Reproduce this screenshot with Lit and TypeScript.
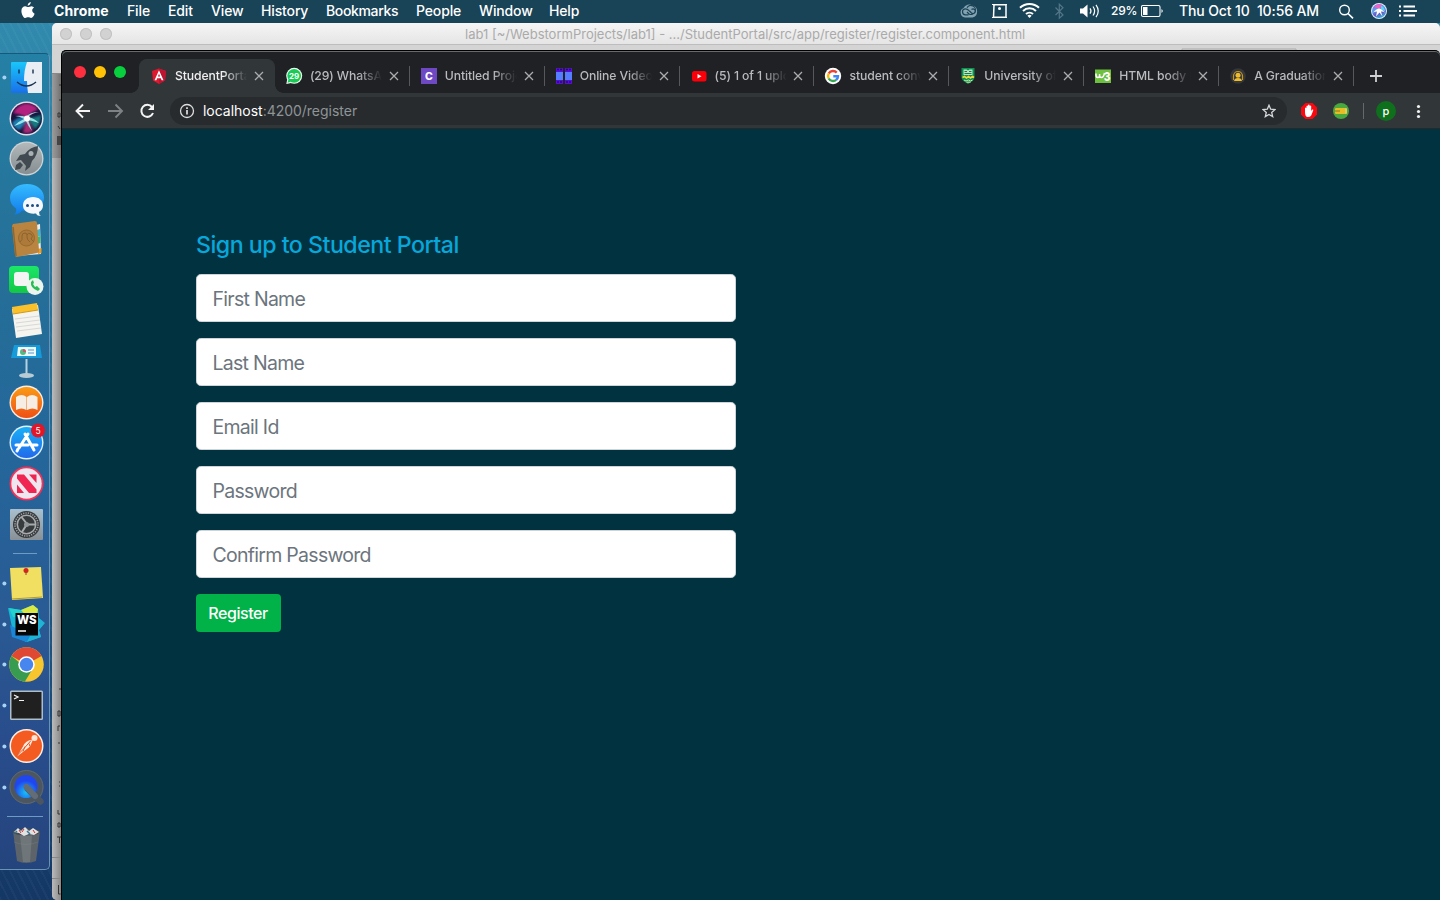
import { LitElement, html, svg, css } from "lit";
import { customElement } from "lit/decorators.js";

const close = html`<svg class="x" viewBox="0 0 10 10" width="10" height="10"><path d="M1 1L9 9M9 1L1 9" stroke="currentColor" stroke-width="1.300"/></svg>`;

@customElement("menu-bar")
class MenuBar extends LitElement {
  static styles = css`
    :host { display: flex; height: 23px; background: #194357; color: #fff; font: 500 14px/22px Inter, sans-serif; letter-spacing: -0.14px; }
    .menus { display: grid; grid-template-columns: 54px 73px 41px 43px 50px 65px 90px 63px 70px 60px; flex: none; white-space: nowrap; }
    .app { font-weight: 700; letter-spacing: 0.1px; }
    .mark { letter-spacing: -0.35px; }
    .apple { margin: 2px 0 0 21px; }
    .right { margin-left: auto; display: grid; grid-template-columns: 154px 68px 160px 101px; height: 23px; white-space: nowrap; flex: none; }
    .pct { font-size: 12px; letter-spacing: -0.25px; display: flex; gap: 4px; }
    .clock { white-space: pre; letter-spacing: -0.12px; }
    svg { display: block; }
  `;
  render() {
    return html`
      <div class="menus">
        <svg class="apple" width="14" height="17" viewBox="0 0 14 17"><path fill="#fff" d="M9.800 0C9.900 1.700 8.500 3.600 6.700 3.700C6.500 2 8.100.2 9.800 0ZM13 5.600C10.300 7.200 10.800 10.500 13.600 11.700C13 13.400 11.700 16 10.100 16C9 16 8.600 15.300 7.200 15.300C5.800 15.300 5.300 16 4.300 16C2.600 15.900.4 12.300.4 8.900C.4 5.800 2.300 4.300 4.200 4.300C5.500 4.300 6.400 5.100 7.200 5.100C8 5.100 9.200 4.200 10.700 4.200C11.400 4.300 12.400 4.700 13 5.600Z"/></svg>
        <span class="app">Chrome</span>
        ${["File", "Edit", "View", "History", "Bookmarks", "People", "Window", "Help"].map((t) => html`<span class=${t === "Bookmarks" ? "mark" : ""}>${t}</span>`)}
      </div>
      <div class="right">
        <svg width="154" height="23" viewBox="957 0 154 23" fill="none">
          <path d="M965 17.500a5 5 0 0 1-1.500-9.500 6.500 6.500 0 0 1 9-2.500 6.200 6.200 0 0 1 0 12z" fill="#84a3b0"/>
          <path stroke="#194357" stroke-width="1.200" d="M968.500 14.800h-3a3 3 0 0 1 0-6q2 0 3.500 1.800l2.500 2.600M967 7.800a4.500 4.500 0 1 1 2 6.200l-2-2M971.500 9.500a2.300 2.300 0 1 1 0 3.500l-2-2"/>
          <path stroke="#fff" stroke-width="1.500" d="M993 4.800H1006M994 5L993.500 17.300H1006V5"/><path stroke="#fff" d="M992 4.500h2M1005 4.500h2M992 17.500h2M1005 17.500h2"/><circle cx="999.500" cy="8.500" r="1.500" fill="#fff"/>
          <g stroke="#fff" stroke-width="2"><path d="M1020 7.800a13.500 13.500 0 0 1 19 0"/><path d="M1023 11a9.300 9.300 0 0 1 13 0"/><path d="M1026 14a5.300 5.300 0 0 1 7 0"/></g><path fill="#fff" d="M1027.400 15.800a3 3 0 0 1 4.200 0L1029.500 18Z"/>
          <path stroke="#527587" stroke-width="1.200" d="M1055.500 7.500L1063 15L1059.300 18.200V4.200L1063 7.800L1055.500 15"/>
          <path fill="#fff" d="M1080 8.500h3l4.500-4v13l-4.500-4h-3z"/><g stroke="#fff" stroke-width="1.200"><path d="M1090 8.300q2 2.700 0 5.400M1093 6.500q3.200 4.500 0 9M1096 4.800q4.500 6.200 0 12.400"/></g>
        </svg>
        <span class="pct"><span>29%</span><svg width="24" height="23" viewBox="0 0 24 23" fill="none"><rect x="0.500" y="5.500" width="18.500" height="11" rx="1.500" stroke="#fff" stroke-width="1.100"/><rect x="2" y="7" width="4.500" height="8" fill="#fff"/><path d="M20.500 9q2.500 2 0 4z" fill="#fff"/></svg></span>
        <span class="clock">Thu Oct 10  10:56 AM</span>
        <svg width="101" height="23" viewBox="1339 0 101 23" fill="none"><defs><linearGradient id="ms" x2=".4" y2="1"><stop offset="0" stop-color="#b44bdc"/><stop offset=".45" stop-color="#5aa4ee"/><stop offset=".75" stop-color="#6a55c8"/><stop offset="1" stop-color="#3c9fd0"/></linearGradient></defs>
          <circle cx="1344.500" cy="10" r="4.800" stroke="#fff" stroke-width="1.400"/><path d="M1348 13.500L1353 18.300" stroke="#fff" stroke-width="1.700"/>
          <circle cx="1379" cy="11" r="8" fill="#dff1ff"/><circle cx="1379" cy="11" r="7" fill="url(#ms)"/><path d="M1374 7q4-4 8-2l-2 4z" fill="#f263c0"/><path d="M1381 5.500q4 2 4 6l-4-2z" fill="#5bd5f5"/><path d="M1373 12.500q4-4 6-4t6 4q-3-1.500-4-1l1.500 5-3-4-3.500 4 1-5q-2 0-4 1z" fill="#fff"/>
          <path stroke="#fff" stroke-width="1.800" d="M1403.500 6.500H1415M1403.500 11H1417M1403.500 15.500H1415M1399 6.500h2M1399 11h2M1399 15.500h2"/>
        </svg>
      </div>`;
  }
}

const dockIcons = [
  svg`<rect x="11" y="5" width="31" height="31" rx="1" fill="url(#fb)"/><path d="M27 5h15v31H28q-1-7-1-12h-3q0-11 3-19z" fill="#e9edf4"/><path d="M19 12.500v4M33 12.500v4" stroke="#173150" stroke-width="1.400"/><path d="M17 25q9.500 8 19 0" fill="none" stroke="#173150" stroke-width="1.400"/>`,
  svg`<circle cx="26.500" cy="20.500" r="17" fill="#e6e8ee"/><circle cx="26.500" cy="20.500" r="15.500" fill="#1a1440"/><g filter="url(#soft)"><path d="M13 15q5-9 14-9.500 8 1 11 6-6 2-11 8-7-4-14-4.500z" fill="#b3247e"/><path d="M12 25q6-8 15-5-3 9-8 12-6-3-7-7z" fill="#1c7cae"/><path d="M27 20q6 0 14-3 0 9-6 14z" fill="#127a80"/><path d="M27 20l6 13q-6 4-10 1z" fill="#a52a72"/></g><path d="M39 14q-7 1-11 5 6 1 11 6-6-2-11-3 2 5 4 11-4-5-6-10-5 3-12 5 5-5 10-7-5-3-9-3 6-1 11 1 4-5 13-5z" fill="#aef4f2" opacity=".85"/><circle cx="27" cy="20.500" r="3" fill="#fff"/>`,
  svg`<circle cx="26.500" cy="20.500" r="17" fill="#d0d3d5"/><circle cx="26.500" cy="20.500" r="15.700" fill="url(#rk)"/><path d="M38 8q-8 1-13 8l-5 1-4 6 5-1 5 6-1 5 5-4 2-6q6-6 6-15z" fill="#414a51"/><circle cx="31" cy="15.500" r="2.500" fill="#aab1b5"/><path d="M20 24l-4 3-1 5 5-1 3-4z" fill="#414a51"/>`,
  svg`<path d="M27 5c10 0 17 6 17 13.500S37 32 27 32q-3 0-5-.5-3 4-8 4 3-2 2-6-6-4-6-11C10 11 17 5 27 5z" fill="url(#bl)"/><path d="M33 18c6 0 10 3.500 10 8.500q0 4-4 6.500 0 3 2 4-4 0-5-2.500c-8 1-13-3-13-8S27 18 33 18z" fill="#f5f8fc"/><g fill="#1d4b88"><circle cx="27.500" cy="26.500" r="1.500"/><circle cx="32.500" cy="26.500" r="1.500"/><circle cx="37.500" cy="26.500" r="1.500"/></g>`,
  svg`<path d="M36 6l4-1 1 30-24 2z" fill="#eee"/><path d="M37 11l3-1v7l-3 1z" fill="#40b6cf"/><path d="M37 18l3.500-1v7l-3.500 1z" fill="#42b870"/><path d="M38 30l3.500-1v5l-3.500 1z" fill="#ed9d26"/><path d="M13 5l22-3q2 0 2 2l2 28q0 2-2 2l-20 4q-2 0-2-2L12 8q0-2 1-3z" fill="#b9843f"/><path d="M13 8l3 29" stroke="#956629" stroke-width="1.500"/><circle cx="26.500" cy="19" r="8" fill="#ad7a39" stroke="#976a31"/><path d="M20 23q3-2 2-6 0-3 3-3t2 4q0 3 3 5M27 16q1-3 4-1t0 5l3 3" fill="none" stroke="#8b6431"/>`,
  svg`<rect x="9" y="6" width="30" height="27" rx="4" fill="url(#gr)"/><rect x="14" y="12" width="15" height="14" rx="3" fill="#f4f4f4"/><circle cx="35" cy="26.500" r="8.500" fill="#edf6ee"/><path d="M31 22q-1 6 7 9l2-2-3-3-2 1-2-3 1-1-1-3z" fill="#29bd56"/>`,
  svg`<path d="M12 8l26-4 4 29-26 4z" fill="#f6f4ee"/><path d="M12 6l25-4 1 7-25 4z" fill="#f9c12c"/><path d="M15 18l24-3M16 22l24-3M16 26l24-3M17 30l24-3" stroke="#d7d8d9"/><path d="M13 13l25-4" stroke="#d19a18"/>`,
  svg`<path d="M14 4h26l2 13H11z" fill="#159bd9"/><path d="M18 6h18v9H17z" fill="#eef9fa"/><circle cx="23" cy="11" r="3" fill="#4dbc83"/><path d="M23 11V8q3 0 3 3z" fill="#df516b"/><path d="M28 9h6M28 12h6" stroke="#529bcd"/><path d="M26.500 18v15" stroke="#b4d3e2" stroke-width="2"/><ellipse cx="26.500" cy="34.500" rx="7.500" ry="2.400" fill="#b8cbd5"/>`,
  svg`<circle cx="26.500" cy="20.500" r="17" fill="#f8eee4"/><circle cx="26.500" cy="20.500" r="15.600" fill="url(#or)"/><path d="M16 15q6-4 10.500 0V28q-5-3-10.500 0zM27 15q5-4 10.500 0v13q-5-3-10.500 0z" fill="#f6eee5"/>`,
  svg`<circle cx="26.500" cy="20.500" r="17" fill="#e2f1ff"/><circle cx="26.500" cy="20.500" r="15.600" fill="url(#ap)"/><path d="M25 12l9 16M28 12L19 26M16 23h12M31 23h6M18 27l-1 2" fill="none" stroke="#fff" stroke-width="3" stroke-linecap="round"/><circle cx="38" cy="8.500" r="7" fill="#e31527"/><text x="38" y="11.500" text-anchor="middle" fill="#fff" font-size="8.500" font-family="Inter, sans-serif">5</text>`,
  svg`<circle cx="26.500" cy="20.500" r="17" fill="#fa3057"/><circle cx="26.500" cy="20.500" r="15.200" fill="#eee7ef"/><path d="M17 11.500h7l12.500 15v3.500H29L17 15.500zM29 11.500h7.500v8.500zM17 21.500l7 8.500h-7z" fill="#f12551"/>`,
  svg`<rect x="10" y="5" width="33" height="31" rx="1" fill="url(#sy)"/><circle cx="26.500" cy="20.500" r="13.500" fill="#373b3e"/><circle cx="26.500" cy="20.500" r="11.500" fill="none" stroke="#9fa3a5" stroke-width="1.600" stroke-dasharray="1.200 1.200"/><circle cx="26.500" cy="20.500" r="9.200" fill="none" stroke="#a7abad" stroke-width="1.600"/><path d="M27 20L21.500 13M27 20.500H36M27 20L22 28" stroke="#a7abad" stroke-width="2"/><circle cx="26.500" cy="20.500" r="2.500" fill="#92989b"/>`,
  svg`<path d="M10 5l31-1 2 31-31 2z" fill="#f1df62"/><path d="M12 36l30-2" stroke="#ad9a3a"/><circle cx="26" cy="7.500" r="2.500" fill="#d22522"/><path d="M26 9v3" stroke="#8a4425"/>`,
  svg`<path d="M8 4l13 2 12-5 5 4 1 9 6 5-6 7 2 7-14 5-13-5z" fill="#18b6d6"/><path d="M21 6l12-5 5 4-1 6H17z" fill="#d9e843"/><path d="M13 13l-4-9 12 2 8 9z" fill="#24d1cc"/><path d="M12 29l16 8 9-5-3-20 5 3 5 4-5 7 2 7-15 5z" fill="#22b3d4"/><path d="M10 21l2 12 15 5 3-6z" fill="#1a86d8"/><rect x="15.500" y="9" width="22.500" height="22.500" fill="#050505"/><text x="17" y="20" fill="#fff" font-size="11.500" font-weight="800" font-family="Inter, sans-serif" textLength="19.500">WS</text><path d="M18 27h8" stroke="#fff" stroke-width="1.500"/>`,
  svg`<circle cx="26.500" cy="20.500" r="17.300" fill="#f7c52d"/><path d="M26.500 20.500L11.500 12a17.300 17.300 0 0 1 30 0z" fill="#df4934"/><path d="M11.500 12a17.300 17.300 0 0 0 13.300 25.700l8-13.200h-6.300z" fill="#389c50"/><circle cx="26.500" cy="20.500" r="8.300" fill="#fff"/><circle cx="26.500" cy="20.500" r="6.700" fill="#4686ee"/>`,
  svg`<rect x="10" y="5.500" width="33" height="29.500" rx="1.500" fill="#aebec8"/><rect x="11.500" y="7" width="30" height="26.500" fill="#202020"/><path d="M14 10l4 2-4 2M19 15.500h5" stroke="#f4f4f4" stroke-width="1.200" fill="none"/>`,
  svg`<circle cx="26.500" cy="20" r="17" fill="#fff0e5"/><circle cx="26.500" cy="20" r="15.500" fill="#f45b21"/><circle cx="34.500" cy="12" r="3" fill="#ffe4d6"/><path d="M33 13.500q-8 1-10 7l-6 10q8-6 13-10z" fill="#ffe8dc"/><path d="M31 14.500l-7 8-8 8M29 17.500l1 3M25 20.500l-2 5" stroke="#d75a2d" fill="none"/>`,
  svg`<circle cx="26.500" cy="20" r="17" fill="#4c5660"/><circle cx="26.500" cy="20" r="16.500" fill="none" stroke="#5f6973"/><circle cx="26" cy="19.500" r="11.500" fill="url(#qt)"/><path d="M28 22L40.500 34.500" stroke="#4c5660" stroke-width="6.500" stroke-linecap="round"/><path d="M26.500 20L35 29" stroke="#626d77" stroke-width="6" stroke-linecap="round"/>`,
];
const running = new Set([0, 12, 13, 14, 15, 16, 17]);

@customElement("app-dock")
class AppDock extends LitElement {
  static styles = css`
    :host { display: flex; flex-direction: column; box-sizing: border-box; width: 51px; height: 817px; padding: 3px 0 0; border: 1px solid #6992b5; border-left: 0; border-top-color: #17597a; border-radius: 0 5px 5px 0; background: linear-gradient(#2580a5, #257098 25%, #24679a 48%, #295b94 68%, #294d8c 84%, #24447d); }
    svg { display: block; overflow: visible; flex: none; margin-left: 0.500px; }
    .upper { display: grid; grid-auto-rows: 40.600px; }
    .lower { display: grid; grid-auto-rows: 40.750px; }
    .line { height: 1px; margin: 8.600px 0 9.200px 14px; width: 24px; background: #6c9bc4; flex: none; }
    .line.wide { margin: 8.500px 0 8px 8px; width: 36px; }
  `;
  icon(i: number) {
    return html`<svg width="52" height="40.750" viewBox="0 0 52 40.750">${running.has(i) ? svg`<circle cx="4.400" cy="20.500" r="2" fill="#a6d2f3"/>` : ""}${dockIcons[i]}
      <defs>
        <filter id="soft"><feGaussianBlur stdDeviation="0.800"/></filter>
        <linearGradient id="fb" x2="0" y2="1"><stop stop-color="#19c6fa"/><stop offset="1" stop-color="#1970ea"/></linearGradient>
        <linearGradient id="rk" x2="0" y2="1"><stop stop-color="#b3b8ba"/><stop offset="1" stop-color="#858e91"/></linearGradient>
        <linearGradient id="bl" x2="0" y2="1"><stop stop-color="#35bcff"/><stop offset="1" stop-color="#127beb"/></linearGradient>
        <linearGradient id="gr" x2="0" y2="1"><stop stop-color="#1be668"/><stop offset="1" stop-color="#13c744"/></linearGradient>
        <linearGradient id="or" x2="0" y2="1"><stop stop-color="#fa9b16"/><stop offset="1" stop-color="#ee4f15"/></linearGradient>
        <linearGradient id="ap" x2="0" y2="1"><stop stop-color="#19b0f7"/><stop offset="1" stop-color="#2269eb"/></linearGradient>
        <linearGradient id="sy" x2="0" y2="1"><stop stop-color="#a9c0ce"/><stop offset="1" stop-color="#899096"/></linearGradient>
        <radialGradient id="qt" cy=".75"><stop stop-color="#16c4f6"/><stop offset="1" stop-color="#2047ef"/></radialGradient>
      </defs></svg>`;
  }
  render() {
    return html`
      <div class="upper">${dockIcons.slice(0, 12).map((_, i) => this.icon(i))}</div>
      <div class="line"></div>
      <div class="lower">${dockIcons.slice(12).map((_, i) => this.icon(i + 12))}</div>
      <div class="line wide"></div>
      <svg width="52" height="41" viewBox="0 0 52 41"><path d="M13 6q13-5 27 0l-4 30q-10 4-19 0z" fill="#5d6469"/><path d="M20 10l3 27h7l2-27z" fill="#7b8286" opacity=".6"/><path d="M14 17q12 5 24 0" stroke="#888e93" fill="none" opacity=".25"/><ellipse cx="26.500" cy="7" rx="13.500" ry="3.500" fill="#444b52"/><path d="M14 7l4-4 3 3 4-4 4 4 4-3 6 4-5 3-5-1-5 2-5-3z" fill="#e1e3e3"/><path d="M19 5l2 3M24 4l-2 3M33 5l2 3" stroke="#c33"/><path d="M27 6l3 3M17 6l-2 2" stroke="#397a97" stroke-width="1.500"/></svg>`;
  }
}

const fav: Record<string, unknown> = {
  angular: svg`<path d="M8 .5l7 2.500-1 9.500L8 16l-6-3.500L1 3z" fill="#e0182d"/><path d="M8 .5l7 2.500-1 9.500L8 16z" fill="#bd1432"/><path d="M3.500 12.300L8 2.200l4.500 10.100h-1.900l-.8-2.100H6.200l-.8 2.100zM6.900 8.500h2.200L8 5.800z" fill="#fff"/>`,
  whatsapp: svg`<circle cx="8.200" cy="7.800" r="8" fill="#f2fff5"/><path d="M.3 16l1-5 4 4z" fill="#f2fff5"/><circle cx="8.200" cy="7.800" r="6.900" fill="#18cb55"/><path d="M1.500 14.800l1-3.500 2.500 2.500z" fill="#18cb55"/><text x="8.200" y="10.700" text-anchor="middle" font-size="8" font-weight="700" fill="#fff">29</text>`,
  c: svg`<rect width="16" height="16" fill="#6f48c4"/><text x="8" y="11.800" text-anchor="middle" font-size="10.500" font-weight="800" fill="#fff">C</text>`,
  video: svg`<path d="M0 0h7v16H0zM9 0h7v16H9z" fill="#5a0cdd"/><path d="M0 4h7v8H0zM9 4h7v8H9z" fill="#567cff"/><path d="M1 1.500h2M4 1.500h2M1 14h2M4 14h2M10 1.500h2M13 1.500h2M10 14h2M13 14h2" stroke="#1b144a" stroke-width="1.500"/>`,
  youtube: svg`<rect x="1" y="3" width="14.500" height="10.500" rx="2.500" fill="#fb0009"/><path d="M6.500 6l4 2.300-4 2.300z" fill="#fff"/>`,
  google: svg`<circle cx="8" cy="8" r="8.200" fill="#fff"/><g fill="none" stroke-width="2.400"><path d="M3.700 5.500A5 5 0 0 1 11.700 4.600" stroke="#e94435"/><path d="M3.700 5.500a5 5 0 0 0 0 5" stroke="#fabb05"/><path d="M3.700 10.500a5 5 0 0 0 7.500 1.400" stroke="#34a853"/><path d="M11.200 11.900Q13 10.200 13 8.200H8.300" stroke="#4285f4"/></g>`,
  university: svg`<path d="M1.500 0h13v9.500q0 3-6.500 6.500Q1.500 12.500 1.500 9.500z" fill="#099452"/><path d="M3.500 1.500h3l1.500 1 1.500-1h3v5.500h-9z" fill="#c5dfc3"/><path d="M4.500 3.500h2.500M9 3.500h2.500M4.500 5.500h7" stroke="#167d48"/><path d="M2.500 9.500l2-1 2 1.500 2-1.500 2 1.500 2-1.500 1.500 1" stroke="#f6d834" stroke-width="1.600" fill="none"/><path d="M4 12l2 1 2.300-1 2.200 1 2-1M6.500 14.200h4" stroke="#d3e6ac" fill="none"/>`,
  w3: svg`<rect y="1.500" width="16" height="13.500" fill="#6ec13e"/><path d="M1 5.500v1.500q0 2.500 1.800 2.500T4.600 7.500V6V7.500q0 2 2 2T9.500 5" stroke="#fff" stroke-width="1.500" fill="none"/><text x="8.800" y="13" font-size="12" font-weight="800" fill="#fff" textLength="6.700" lengthAdjust="spacingAndGlyphs">3</text>`,
  graduation: svg`<circle cx="8" cy="8" r="7.800" fill="#34373c"/><path d="M3.500 12V8a4.500 4.500 0 0 1 9 0v4" fill="none" stroke="#c7981b" stroke-width="1.200"/><circle cx="8" cy="7.300" r="2.500" fill="#edbd2c"/><path d="M4 13q.5-3 4-3t4 3z" fill="#edbd2c"/>`,
};
const tabs = [["angular", "StudentPortal"], ["whatsapp", "(29) WhatsApp"], ["c", "Untitled Project"], ["video", "Online Video"], ["youtube", "(5) 1 of 1 upload"], ["google", "student conv"], ["university", "University of"], ["w3", "HTML body b"], ["graduation", "A Graduation"]];

@customElement("chrome-window")
class ChromeWindow extends LitElement {
  static styles = css`
    :host { display: flex; flex-direction: column; box-sizing: border-box; border: 1px solid #000; border-right: 0; border-bottom: 0; border-radius: 5px 5px 0 0; background: #00323f; overflow: hidden; font-family: Inter, sans-serif; }
    svg { display: block; flex: none; }
    .strip { height: 42px; display: flex; align-items: flex-end; background: #202125; box-shadow: inset 0 1px #69696b; border-radius: 5px 5px 0 0; flex: none; }
    .lights { display: flex; gap: 8px; padding-left: 12px; width: 65px; align-self: center; flex: none; }
    .dot { width: 12px; height: 12px; border-radius: 50%; background: #fe3040; }
    .dot.y { background: #ffc105; } .dot.g { background: #08cf3e; }
    .tab { display: flex; align-items: center; box-sizing: border-box; width: 134.900px; height: 34px; padding: 0 10px 0 12px; color: #b9bbbd; flex: none; position: relative; }
    .tab.on { background: #313639; color: #f0f0f0; border-radius: 8px 8px 0 0; box-shadow: 1px 0 #313639; }
    .tab.on::before, .tab.on::after { content: ""; position: absolute; bottom: 0; width: 8px; height: 8px; }
    .tab.on::before { left: -8px; background: radial-gradient(circle at 0 0, transparent 7.500px, #313639 8px); }
    .tab.on::after { right: -9px; background: radial-gradient(circle at 100% 0, transparent 7.500px, #313639 8px); }
    .tab:not(.on)::after { content: ""; position: absolute; right: -1px; top: 7px; width: 1px; height: 20px; background: #56585b; }
    .name { width: 72px; margin: 0 7px 0 8px; overflow: hidden; white-space: nowrap; font: 500 12.200px/18px Inter, sans-serif; letter-spacing: -0.1px; mask-image: linear-gradient(90deg, #000 48px, transparent 72px); }
    .x { color: #aaacae; }
    .plus { margin: 0 0 11px 17px; }
    .bar { height: 36px; display: flex; align-items: center; background: #313639; border-bottom: 1px solid #24292b; box-sizing: border-box; flex: none; }
    .omni { display: flex; align-items: center; box-sizing: border-box; width: 1117px; height: 28px; border-radius: 14px; background: #272b2e; padding: 0 11px 0 9px; color: #8f9497; font-size: 14px; flex: none; }
    .url { margin-left: 8px; flex: 1; letter-spacing: -0.02px; }
    .host { color: #fff; }
    .page { flex: 1; padding: 102px 0 0 134px; }
    .form { display: flex; flex-direction: column; align-items: flex-start; gap: 16px; width: 540px; }
    h1 { margin: 0 0 -2px; height: 29px; font: 500 23.200px/29px Inter, sans-serif; color: #08a7db; letter-spacing: -0.510px; white-space: nowrap; }
    input { display: block; box-sizing: border-box; width: 540px; height: 48px; border: 1px solid #ced4da; border-radius: 4.800px; background: #fff; padding: 2px 16px 0 15.500px; font: 400 19.500px/30px Inter, sans-serif; letter-spacing: -0.720px; outline: 0; }
    input::placeholder { color: #6c757d; opacity: 1; }
    button { width: 85px; height: 38px; padding: 0 1px 0 0; border: 0; border-radius: 4px; background: #00b247; color: #fff; font: 500 16px/24px Inter, sans-serif; letter-spacing: -0.450px; }
  `;
  render() {
    return html`
      <div class="strip">
        <div class="lights"><i class="dot"></i><i class="dot y"></i><i class="dot g"></i></div>
        ${tabs.map(([icon, name], i) => html`<div class="tab ${i ? "" : "on"}"><svg width="16" height="16" viewBox="0 0 16 16" overflow="visible">${fav[icon]}</svg><span class="name">${name}</span>${close}</div>`)}
        <svg class="plus" width="12" height="12" viewBox="0 0 12 12"><path d="M6 0v12M0 6h12" stroke="#d0d1d2" stroke-width="1.800"/></svg>
      </div>
      <div class="bar">
        <svg width="108" height="36" viewBox="62 93 108 36" fill="none"><path d="M83 104.500L76.500 111L83 117.500M77 111H90" stroke="#f4f4f4" stroke-width="1.900"/><path d="M115.500 104.500L122 111L115.500 117.500M108 111H121" stroke="#7e8285" stroke-width="1.900"/><path d="M152 107A6 6 0 1 0 153 113" stroke="#f4f4f4" stroke-width="2"/><path d="M154 104v6h-6z" fill="#f4f4f4"/></svg>
        <div class="omni">
          <svg width="16" height="16" viewBox="0 0 16 16"><circle cx="8" cy="8" r="6.500" fill="none" stroke="#ddd" stroke-width="1.300"/><path d="M8 7v4.500M8 4.200v1.700" stroke="#eee" stroke-width="1.600"/></svg>
          <span class="url"><span class="host">localhost</span>:4200/register</span>
          <svg class="star" width="14" height="14" viewBox="0 0 14 14"><path d="M7 1.200l1.700 4 4.300.4-3.300 2.800 1 4.200L7 10.400l-3.700 2.200 1-4.200L1 5.600l4.300-.4z" fill="none" stroke="#d5d7d8" stroke-width="1.300"/></svg>
        </div>
        <svg width="153" height="36" viewBox="1287 93 153 36"><path d="M1305.500 103h7l4.500 4.500v7l-4.500 4.500h-7l-4.500-4.500v-7z" fill="#fa0710"/><path d="M1305 112v-4q1-1 1.500 0v-2q1-1 1.500 0v-1q1-1 1.600 0v1q1-1 1.600 0v5l1-1.500q1.500-.5 1 1l-2 5q-1 1.500-3.500 1.500-2.700 0-2.700-5z" fill="#fff"/><circle cx="1341" cy="111" r="8" fill="#49a93f"/><rect x="1335" y="108" width="12" height="6" rx="1" fill="#e7bd24"/><path d="M1335 111h5" stroke="#85752a"/><path d="M1346 108.500v5" stroke="#d8dcc0"/><path d="M1363.500 103v16" stroke="#66696b"/><circle cx="1386" cy="111" r="10" fill="#0e701c"/><text x="1386" y="114.500" font-size="11" font-weight="500" text-anchor="middle" fill="#fff">p</text><g fill="#f1f1f1"><circle cx="1418.500" cy="106.500" r="1.600"/><circle cx="1418.500" cy="111.500" r="1.600"/><circle cx="1418.500" cy="116.500" r="1.600"/></g></svg>
      </div>
      <div class="page"><div class="form">
        <h1>Sign up to Student Portal</h1>
        ${["First Name", "Last Name", "Email Id", "Password", "Confirm Password"].map((p) => html`<input placeholder=${p} />`)}
        <button>Register</button>
      </div></div>`;
  }
}

@customElement("app-root")
class AppRoot extends LitElement {
  static styles = css`
    :host { display: block; position: relative; width: 1440px; height: 900px; overflow: hidden; background: repeating-linear-gradient(63deg, #ffffff08 0 2px, transparent 2px 7px), linear-gradient(#328cae, #2679a0 25%, #205d86 60%, #143765); }
    .editor { position: absolute; left: 52px; top: 23px; width: 1388px; height: 877px; border-radius: 5px 5px 0 5px; overflow: hidden; background: #aaa; }
    .title { display: flex; height: 21px; border-bottom: 1px solid #bdbdbd; background: linear-gradient(#f5f5f5, #e5e5e5); color: #aaa; font: 400 13px/23px Inter, sans-serif; letter-spacing: 0; white-space: nowrap; }
    .lights { display: flex; gap: 8px; padding: 5px 0 0 8px; width: 405px; flex: none; }
    .off { width: 12px; height: 12px; border-radius: 50%; background: #d2d2d2; box-shadow: inset 0 0 0 1px #c2c2c2; }
    .sidebar { display: block; }
    .wind { position: absolute; left: 61px; top: 50px; width: 1379px; height: 850px; }
    .dock { position: absolute; left: -1px; top: 53px; }
  `;
  render() {
    return html`
      <menu-bar></menu-bar>
      <div class="editor">
        <div class="title"><div class="lights"><i class="off"></i><i class="off"></i><i class="off"></i></div><span>lab1 [~/WebstormProjects/lab1] - .../StudentPortal/src/app/register/register.component.html</span></div>
        <svg class="sidebar" width="1388" height="855" viewBox="52 45 1388 855">
          <defs><linearGradient id="sh"><stop stop-color="#bbb"/><stop offset="1" stop-color="#888"/></linearGradient></defs>
          <rect x="52" y="45" width="1388" height="28" fill="#d4d4d4"/><path d="M1182 50v-1h114v1" stroke="#aaa" fill="none"/>
          <rect x="52" y="73" width="9" height="827" fill="url(#sh)"/><rect x="52" y="73" width="9" height="85" fill="#000" opacity=".16"/>
          <path d="M52 73.500h9M52 857.500h9M52 878.500h9" stroke="#888"/>
          <rect x="57" y="136" width="4" height="9" fill="#444"/>
          <path d="M59 85h2M59 100h2M58 113h2v4h-2zM58 126l2 3M59 689h2M58 711h2v5h-2zM58 731v-5h2M58 743h2M59 782h1M59 786h1M58 810v4h2M58 823h2v4h-2zM57 837h4M59.500 837v6M58.500 885v9h2" stroke="#333" fill="none"/>
        </svg>
      </div>
      <chrome-window class="wind"></chrome-window>
      <app-dock class="dock"></app-dock>`;
  }
}
